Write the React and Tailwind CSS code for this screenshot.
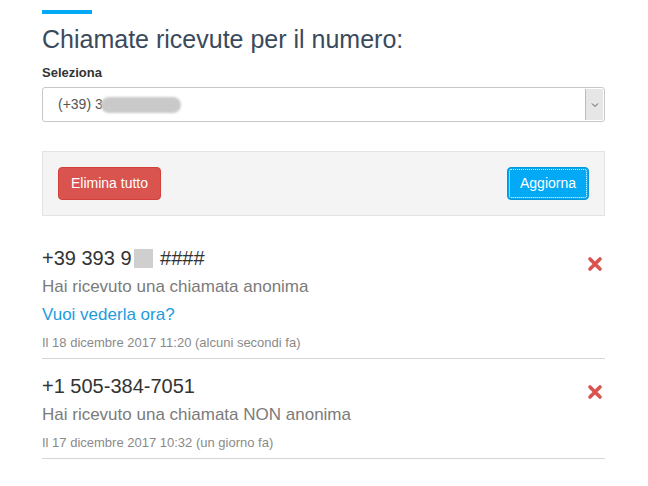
import React from 'react';

const calls = [
  {
    id: 1,
    hidden: true,
    text: 'Hai ricevuto una chiamata anonima',
    link: 'Vuoi vederla ora?',
    date: 'Il 18 dicembre 2017 11:20 (alcuni secondi fa)',
  },
  {
    id: 2,
    number: '+1 505-384-7051',
    text: 'Hai ricevuto una chiamata NON anonima',
    date: 'Il 17 dicembre 2017 10:32 (un giorno fa)',
  },
];

const RemoveIcon = () => (
  <svg width="16" height="16" viewBox="0 0 16 16" className="text-[#d9534f]">
    <path d="M3 3 L13 13 M13 3 L3 13" stroke="currentColor" strokeWidth="3.6" strokeLinecap="round" />
  </svg>
);

const CallItem = ({ call }) => (
  <div className="flex justify-between pt-[16px] pb-[7px] border-b border-[#d5d5d5]">
    <div>
      <div className="text-[20px] leading-[22px] text-[#333]">
        {call.hidden ? (
          <span className="inline-flex items-center">
            +39 393 9
            <span className="inline-block w-[19px] h-[19px] bg-[#cfcfcf] blur-[0.5px] mx-[2px]" />
            &nbsp;####
          </span>
        ) : (
          call.number
        )}
      </div>
      <p className="mt-[7px] text-[17px] leading-[22px] text-[#7b7b7b]">{call.text}</p>
      {call.link && (
        <a href="#" className="block mt-[6px] text-[17px] leading-[22px] text-[#1d9be0]">
          {call.link}
        </a>
      )}
      <p className="mt-[8px] text-[13px] leading-[17px] text-[#8a8a8a]">{call.date}</p>
    </div>
    <button className="self-start mt-[9px] mr-[2px]">
      <RemoveIcon />
    </button>
  </div>
);

const App = () => {
  return (
    <div className="min-h-screen bg-white font-['Liberation_Sans',Arial,sans-serif]">
      <div className="w-[563px] ml-[42px] pt-[10px]">
        <div className="w-[50px] h-[4px] bg-[#03a9f4]" />
        <h1 className="mt-[12px] text-[25px] leading-[27px] text-[#3a4a5c]">
          Chiamate ricevute per il numero:
        </h1>

        <p className="mt-[11px] text-[13px] leading-[18px] font-bold text-[#333]">Seleziona</p>
        <div className="mt-[5px] h-[35px] flex items-stretch border border-[#c8c8c8] rounded-[3px] bg-white">
          <div className="flex-1 flex items-center pl-[15px] text-[14px] text-[#555]">
            (+39) 3
            <span className="inline-block w-[80px] h-[16px] rounded-full bg-[#c9c9c9] blur-[1px] -ml-[2px]" />
          </div>
          <div className="w-[18px] my-[1px] mr-[1px] flex items-center justify-center bg-[#e6e6e6] border-l border-[#bcbcbc]">
            <svg width="8" height="6" viewBox="0 0 8 6">
              <path d="M1 1.5 L4 4.5 L7 1.5" fill="none" stroke="#555" strokeWidth="1" />
            </svg>
          </div>
        </div>

        <div className="mt-[29px] flex justify-between p-[15px] bg-[#f4f4f4] border border-[#e3e3e3]">
          <button className="w-[103px] h-[33px] rounded-[4px] bg-[#d9534f] border border-[#d43f3a] text-white text-[14px]">
            Elimina tutto
          </button>
          <button className="w-[82px] h-[33px] rounded-[4px] bg-[#03a9f4] border border-[#0398dc] text-white text-[14px] outline-1 outline-dotted outline-white -outline-offset-[3px]">
            Aggiorna
          </button>
        </div>

        <div className="mt-[15px]">
          {calls.map((call) => (
            <CallItem key={call.id} call={call} />
          ))}
        </div>
      </div>
    </div>
  );
};

export default App;
